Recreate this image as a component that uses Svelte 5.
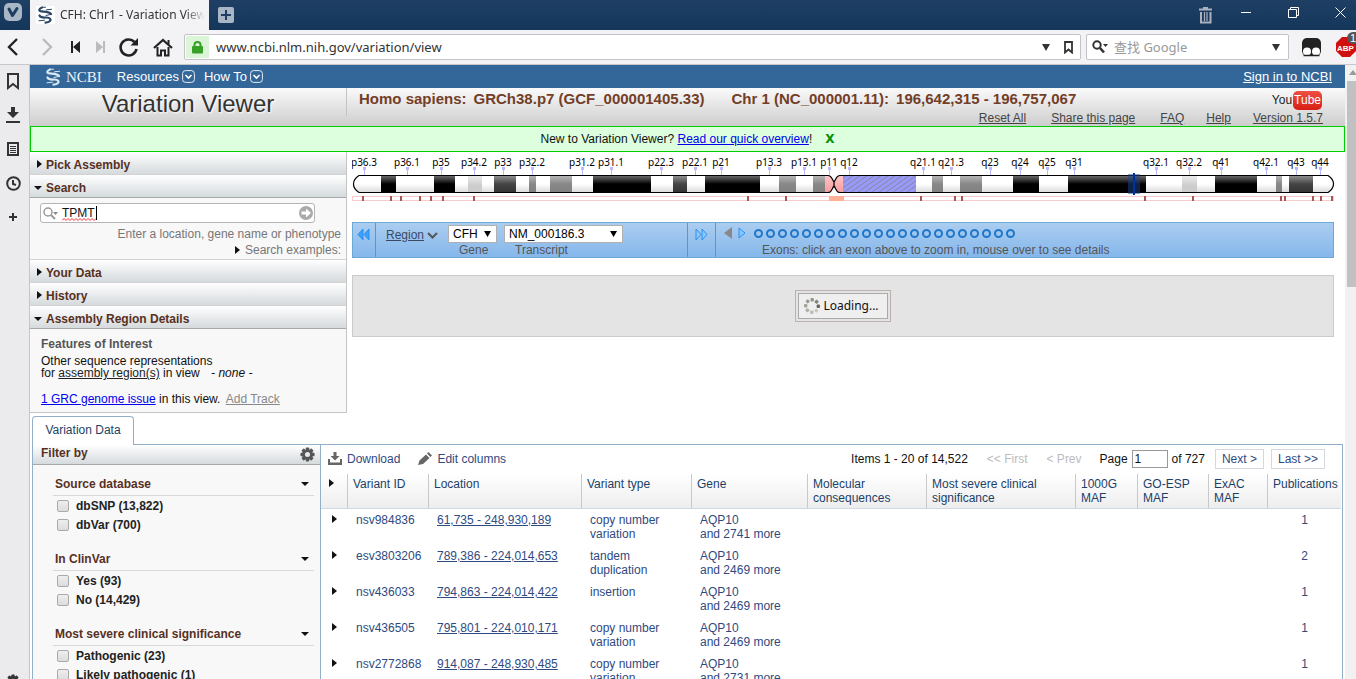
<script>
  let query = $state('TPMT');
  let page = $state('1');

  // Chromosome bands: [start, end, fill]
  const bands = [
    [381, 396, 'black'], [434, 455, 'black'], [468, 482, 'light'], [494, 516, 'dark'],
    [529, 536, 'mid'], [550, 572, 'mid'], [593, 651, 'black'], [673, 687, 'dark'],
    [705, 760, 'black'], [779, 796, 'mid'], [813, 825, 'mid'], [825, 834, 'pink'],
    [834, 843, 'pink'], [843, 916, 'hatch'], [932, 943, 'mid'], [960, 982, 'mid'],
    [1013, 1039, 'black'], [1068, 1146, 'black'], [1182, 1197, 'light'], [1215, 1257, 'black'],
    [1276, 1282, 'mid'], [1289, 1313, 'dark']
  ];
  const labels = [
    ['p36.3', 364], ['p36.1', 407], ['p35', 441], ['p34.2', 474], ['p33', 503], ['p32.2', 532],
    ['p31.2', 582], ['p31.1', 611], ['p22.3', 661], ['p22.1', 695], ['p21', 721], ['p13.3', 769],
    ['p13.1', 804], ['p11', 829], ['q12', 849], ['q21.1', 923], ['q21.3', 951], ['q23', 990],
    ['q24', 1020], ['q25', 1047], ['q31', 1074], ['q32.1', 1156], ['q32.2', 1189], ['q41', 1221],
    ['q42.1', 1266], ['q43', 1296], ['q44', 1320]
  ];
  const ticks = [362, 390, 400, 419, 430, 442, 473, 747, 785, 920, 954, 961, 1144, 1192, 1280, 1284, 1312, 1320, 1331];
  const exons = Array.from({ length: 22 }, (_, i) => i + 1);

  const filters = [
    { title: 'Source database', items: ['dbSNP (13,822)', 'dbVar (700)'] },
    { title: 'In ClinVar', items: ['Yes (93)', 'No (14,429)'] },
    { title: 'Most severe clinical significance', items: ['Pathogenic (23)', 'Likely pathogenic (1)'] }
  ];
  const rows = [
    ['nsv984836', '61,735 - 248,930,189', 'copy number variation', 2741, 1],
    ['esv3803206', '789,386 - 224,014,653', 'tandem duplication', 2469, 2],
    ['nsv436033', '794,863 - 224,014,422', 'insertion', 2469, 1],
    ['nsv436505', '795,801 - 224,010,171', 'copy number variation', 2469, 1],
    ['nsv2772868', '914,087 - 248,930,485', 'copy number variation', 2731, 1]
  ];
  const spinner = ['#96968c', '#85857b', '#66665c', '#c9c9bf', '#bdbdb3', '#b0b0a6', '#a3a399', '#9a9a90'];
</script>

{#snippet helix(color)}
  <svg width="17" height="18" viewBox="0 0 17 18" fill="none" stroke={color} stroke-linecap="round" aria-hidden="true">
    <path stroke-width="2.2" d="M5 1.500C1.500 3 1.500 5 4.500 5.400C8 5.800 12.500 5.500 14 8" />
    <path stroke-width="1" d="M6 1.300L8.500 1.200M9.500 3.800L14.500 3.300" />
    <path stroke-width="2.2" d="M2.500 9.500C3.500 12 7 11.500 9.500 11.500C13 11.500 14.500 13.500 13 15C12 16 10.500 16.500 8.500 16.600" />
    <path stroke-width="1" d="M9 9.500L14 8.300M2 14.800L7.500 14.200" />
  </svg>
{/snippet}

{#snippet caretRight()}
  <svg width="5" height="8" viewBox="0 0 5 8" aria-hidden="true"><path d="M0 0L5 4L0 8Z" fill="#111" /></svg>
{/snippet}

{#snippet caretDown()}
  <svg width="8" height="4" viewBox="0 0 8 4" aria-hidden="true"><path d="M0 0H8L4 4Z" fill="#111" /></svg>
{/snippet}

{#snippet menuMark()}
  <svg width="13" height="13" viewBox="0 0 13 13" fill="none" aria-hidden="true">
    <rect x=".6" y=".6" width="11.800" height="11.800" rx="3" stroke="#e8eef5" />
    <path d="M3.500 5L6.500 8L9.500 5" stroke="#fff" stroke-width="1.600" />
  </svg>
{/snippet}

{#snippet gear(size, color)}
  <svg width={size} height={size} viewBox="0 0 16 16" aria-hidden="true">
    <g fill={color}>
      {#each [0, 45, 90, 135] as a}
        <rect x="6.200" y="0.500" width="3.600" height="15" rx=".8" transform="rotate({a} 8 8)" />
      {/each}
    </g>
    <circle cx="8" cy="8" r="4.200" fill="none" stroke={color} stroke-width="3" />
    <circle cx="8" cy="8" r="2.700" fill="#e6e9ec" />
  </svg>
{/snippet}

<div class="browser">
  <div class="titlebar">
    <button class="vivaldi" aria-label="Menu">
      <svg width="18" height="18" viewBox="0 0 18 18"><rect width="18" height="18" rx="5" fill="#a9b6c5" /><path d="M5 6L8.500 12.500L13 5.500" fill="none" stroke="#1d3d61" stroke-width="3" stroke-linecap="round" stroke-linejoin="round" /></svg>
    </button>
    <div class="tab">
      <span class="favicon">{@render helix('#2b4763')}</span>
      <span class="tab-title">CFH: Chr1 - Variation View</span>
    </div>
    <button class="newtab" aria-label="New tab">
      <svg width="16" height="16" viewBox="0 0 16 16"><rect width="16" height="16" rx="2" fill="#a9b6c5" /><path d="M8 3V13M3 8H13" stroke="#1d3d61" stroke-width="2" /></svg>
    </button>
    <div class="window-buttons">
      <button class="trash" aria-label="Closed tabs">
        <svg width="14" height="17" viewBox="0 0 14 17" fill="none" stroke="#a9b2bd"><path d="M0 2.500H13M4 1H9" stroke-width="2" /><path d="M2 5V15.500H11.500V5" stroke-width="2" /><path d="M5.500 5V14M8 5V14" stroke-width="1.200" /></svg>
      </button>
      <button class="minimize" aria-label="Minimize"><svg width="11" height="7" viewBox="0 0 11 7"><path d="M0 3.500H10" stroke="#fff" /></svg></button>
      <button class="restore" aria-label="Restore"><svg width="11" height="11" viewBox="0 0 11 11" fill="none" stroke="#fff"><path d="M.5 2.500H8.500V10.500H.5ZM2.500 2.500V.5H10.500V8.500H8.500" /></svg></button>
      <button aria-label="Close"><svg width="11" height="11" viewBox="0 0 11 11"><path d="M.5 .5L10.500 10.500M10.500 .5L.5 10.500" stroke="#fff" /></svg></button>
    </div>
  </div>

  <div class="toolbar">
    <div class="nav">
      <button aria-label="Back"><svg width="12" height="18" viewBox="0 0 12 18"><path d="M10 1L2 9L10 17" fill="none" stroke="#222" stroke-width="2.400" /></svg></button>
      <button aria-label="Forward"><svg width="12" height="18" viewBox="0 0 12 18"><path d="M2 1L10 9L2 17" fill="none" stroke="#bbb" stroke-width="2.400" /></svg></button>
      <button aria-label="Rewind"><svg width="10" height="12" viewBox="0 0 10 12" fill="#222"><path d="M0 0H2V12H0ZM2 6L9 0V12Z" /></svg></button>
      <button aria-label="Fast forward"><svg width="10" height="12" viewBox="0 0 10 12" fill="#bbb"><path d="M8 0H10V12H8ZM8 6L1 0V12Z" /></svg></button>
      <button aria-label="Reload"><svg width="20" height="20" viewBox="0 0 20 20"><path d="M15.500 5A8 8 0 1 0 17.500 12" fill="none" stroke="#222" stroke-width="2.600" /><path d="M19 1V8.500H11.500Z" fill="#222" /></svg></button>
      <button aria-label="Home"><svg width="20" height="19" viewBox="0 0 20 19" fill="none" stroke="#222"><path d="M1 10L10 2L19 10" stroke-width="2.200" /><path d="M4.500 9V17.500H8V12.500H12V17.500H15.500V9" stroke-width="2" /><path d="M15.500 2V6" stroke-width="2" /></svg></button>
    </div>
    <div class="url">
      <span class="lock"><svg width="11" height="13" viewBox="0 0 11 13"><path d="M2.500 6V4A3 3 0 0 1 8.500 4V6" fill="none" stroke="#37a127" stroke-width="2" /><rect y="5" width="11" height="7.500" rx="1" fill="#37a127" /></svg></span>
      <input aria-label="Address" value="www.ncbi.nlm.nih.gov/variation/view" />
      <svg width="8" height="7" viewBox="0 0 8 7"><path d="M0 0H8L4 7Z" fill="#333" /></svg>
      <svg class="mark" width="9" height="13" viewBox="0 0 9 13"><path d="M1 1H8V11.500L4.500 8.500L1 11.500Z" fill="none" stroke="#333" stroke-width="1.800" /></svg>
    </div>
    <div class="find">
      <svg width="17" height="14" viewBox="0 0 17 14"><circle cx="5" cy="5" r="3.700" fill="none" stroke="#333" stroke-width="2" /><path d="M8 8L12 12.500" stroke="#333" stroke-width="2.600" /><path d="M11 4H16L13.500 7Z" fill="#333" /></svg>
      <input aria-label="Search the web" placeholder="查找 Google" />
      <svg width="8" height="7" viewBox="0 0 8 7"><path d="M0 0H8L4 7Z" fill="#333" /></svg>
    </div>
    <button class="ext" aria-label="Extension">
      <svg width="19" height="19" viewBox="0 0 19 19"><rect width="19" height="18" rx="5" fill="#222" /><circle cx="5" cy="13.500" r="4" fill="#fff" /><circle cx="14" cy="13.500" r="4" fill="#fff" /><path d="M1.500 17.500H17.500" stroke="#222" stroke-width="1.500" /></svg>
    </button>
    <button class="abp" aria-label="Ad blocker"><svg width="20" height="20" viewBox="0 0 20 20"><path d="M6 0H14L20 6V14L14 20H6L0 14V6Z" fill="#d0100e" /></svg><b>ABP</b><i>1</i></button>
  </div>

  <div class="body">
    <nav class="panelbar" aria-label="Panels">
      <button aria-label="Bookmarks"><svg width="12" height="17" viewBox="0 0 12 17"><path d="M1 1H11V15L6 11L1 15Z" fill="none" stroke="#333" stroke-width="2" /></svg></button>
      <button aria-label="Downloads"><svg width="14" height="16" viewBox="0 0 14 16" fill="#333"><path d="M5 0H9V5H13L7 11L1 5H5ZM0 14H14V16H0Z" /></svg></button>
      <button aria-label="Notes"><svg width="12" height="14" viewBox="0 0 12 14"><rect x="1" y="1" width="10" height="12" fill="none" stroke="#333" stroke-width="2" /><path d="M3 4.500H9M3 6.500H9M3 8.500H9M3 10.500H9" stroke="#333" /></svg></button>
      <button aria-label="History"><svg width="15" height="15" viewBox="0 0 15 15" fill="none" stroke="#333" stroke-width="2"><circle cx="7.500" cy="7.500" r="6.300" /><path d="M7 4V8L10 9" /></svg></button>
      <button aria-label="Add panel"><svg width="8" height="8" viewBox="0 0 8 8"><path d="M4 0V8M0 4H8" stroke="#333" stroke-width="2" /></svg></button>
      <button class="settings" aria-label="Settings">{@render gear(14, '#333')}</button>
    </nav>

    <div class="page">
      <header class="ncbi">
        {@render helix('#dbe7f2')}
        <span class="brand">NCBI</span>
        <button>Resources {@render menuMark()}</button>
        <button>How To {@render menuMark()}</button>
        <a class="signin" href="#signin">Sign in to NCBI</a>
      </header>

      <div class="heading">
        <h1>Variation Viewer</h1>
        <div class="meta">
          <div class="assembly">
            <span>Homo sapiens:</span><span>GRCh38.p7 (GCF_000001405.33)</span>
            <span class="chr">Chr 1 (NC_000001.11):</span><span>196,642,315 - 196,757,067</span>
            <a class="youtube" href="#youtube">You<b>Tube</b></a>
          </div>
          <div class="links">
            <a href="#reset">Reset All</a><a href="#share">Share this page</a><a href="#faq">FAQ</a><a href="#help">Help</a><a href="#version">Version 1.5.7</a>
          </div>
        </div>
      </div>

      <div class="notice">
        <span>New to Variation Viewer? <a href="#overview">Read our quick overview</a>!</span>
        <button aria-label="Dismiss">X</button>
      </div>

      <div class="main">
        <aside class="accordion">
          <h2><button><span class="mark">{@render caretRight()}</span>Pick Assembly</button></h2>
          <h2 class="open"><button><span class="mark">{@render caretDown()}</span>Search</button></h2>
          <form class="search">
            <div class="field">
              <svg width="16" height="13" viewBox="0 0 16 13"><circle cx="5" cy="5" r="4" fill="none" stroke="#999" stroke-width="1.500" /><path d="M8 8L12 12" stroke="#999" stroke-width="2" /><path d="M10 5H15L12.500 8Z" fill="#888" /></svg>
              <input aria-label="Search location" spellcheck="false" bind:value={query} />
              <svg class="squiggle" width="34" height="3" viewBox="0 0 34 3"><path d="M0 2.500L2 .5L4 2.500L6 .5L8 2.500L10 .5L12 2.500L14 .5L16 2.500L18 .5L20 2.500L22 .5L24 2.500L26 .5L28 2.500L30 .5L32 2.500L34 .5" fill="none" stroke="#f03030" /></svg>
              <span class="cursor"></span>
              <button type="button" aria-label="Go"><svg width="14" height="14" viewBox="0 0 14 14"><circle cx="7" cy="7" r="7" fill="#aaa" /><path d="M2.500 5.500H7V2.500L12 7L7 11.500V8.500H2.500Z" fill="#fff" /></svg></button>
            </div>
            <p>Enter a location, gene name or phenotype</p>
            <p>{@render caretRight()} Search examples:</p>
          </form>
          <h2><button><span class="mark">{@render caretRight()}</span>Your Data</button></h2>
          <h2><button><span class="mark">{@render caretRight()}</span>History</button></h2>
          <h2 class="open"><button><span class="mark">{@render caretDown()}</span>Assembly Region Details</button></h2>
          <div class="details">
            <h3>Features of Interest</h3>
            <p>Other sequence representations<br />for <a href="#regions">assembly region(s)</a> in view <em>- none -</em></p>
            <p class="issue"><a href="#issue">1 GRC genome issue</a> in this view. <a class="add" href="#track">Add Track</a></p>
          </div>
        </aside>

        <section class="viewer">
          <svg class="ideogram" viewBox="352 152 982 50" role="img" aria-label="Chromosome 1">
            <defs>
              <linearGradient id="black" x2="0" y2="1"><stop offset="0" stop-color="#777" /><stop offset=".4" stop-color="#1a1a1a" /><stop offset=".5" stop-color="#000" /></linearGradient>
              <linearGradient id="dark" x2="0" y2="1"><stop offset="0" stop-color="#999" /><stop offset=".5" stop-color="#444" /><stop offset="1" stop-color="#333" /></linearGradient>
              <linearGradient id="mid" x2="0" y2="1"><stop offset="0" stop-color="#bbb" /><stop offset=".5" stop-color="#888" /><stop offset="1" stop-color="#808080" /></linearGradient>
              <linearGradient id="light" x2="0" y2="1"><stop offset="0" stop-color="#eee" /><stop offset=".6" stop-color="#ccc" /><stop offset="1" stop-color="#ccc" /></linearGradient>
              <linearGradient id="pink" x2="0" y2="1"><stop offset="0" stop-color="#ffc8c8" /><stop offset="1" stop-color="#f99a9a" /></linearGradient>
              <linearGradient id="white" x2="0" y2="1"><stop offset=".5" stop-color="#fff" /><stop offset="1" stop-color="#d8d8d8" /></linearGradient>
              <pattern id="hatch" width="7" height="5" patternUnits="userSpaceOnUse"><rect width="7" height="5" fill="#9999f8" /><path d="M0 5L7 0" stroke="#8585a0" /></pattern>
              <clipPath id="arms"><path d="M359 175.500H828C832 175.500 832 180 834 182V186C832 188 832 192.500 828 192.500H359Q353.500 189 353.500 184T359 175.500ZM840 175.500H1328Q1333.500 179 1333.500 184T1328 192.500H840C836 192.500 836 188 834 186V182C836 180 836 175.500 840 175.500Z" /></clipPath>
            </defs>
            {#each labels as [name, x]}
              <text {x} y="166" text-anchor="middle">{name}</text>
              <path d="M{x - 1} 167H{x + 2}V170H{x + 1}V175H{x}V170H{x - 1}Z" fill="#b9b9fb" />
            {/each}
            <g clip-path="url(#arms)">
              <rect x="353" y="175" width="981" height="18" fill="url(#white)" />
              {#each bands as [a, b, fill]}
                <rect x={a} y="175" width={b - a} height="18" fill="url(#{fill})" />
              {/each}
            </g>
            <path fill="none" stroke="#000" stroke-width="1.200" d="M359 175.500H828C832 175.500 832 180 834 182V186C832 188 832 192.500 828 192.500H359Q353.500 189 353.500 184T359 175.500ZM840 175.500H1328Q1333.500 179 1333.500 184T1328 192.500H840C836 192.500 836 188 834 186V182C836 180 836 175.500 840 175.500Z" />
            <rect x="1128" y="174" width="12" height="20" fill="#1b418f" opacity=".5" />
            <rect x="1133" y="173" width="2" height="22" fill="#003399" />
            <rect x="352.500" y="196.500" width="981" height="4" fill="#fff" stroke="#f6cccc" />
            <rect x="829" y="196" width="15" height="5" fill="#ffaf93" />
            {#each ticks as x}
              <rect {x} y="196" width="2" height="5" fill="#a85555" />
            {/each}
          </svg>

          <div class="controls">
            <button class="prev" aria-label="Previous"><svg width="13" height="13" viewBox="0 0 13 13" fill="#3da0fa" stroke="#2b90ee"><path d="M6 1V12L1 6.500ZM12 1V12L7 6.500Z" /></svg></button>
            <div class="region">
              <button class="region-link"><u>Region</u> <svg width="11" height="7" viewBox="0 0 11 7"><path d="M1 1L5.500 5.500L10 1" fill="none" stroke="#555" stroke-width="2" /></svg></button>
              <div class="pick gene"><div class="drop"><select aria-label="Gene"><option>CFH</option></select></div><span>Gene</span></div>
              <div class="pick transcript"><div class="drop"><select aria-label="Transcript"><option>NM_000186.3</option></select></div><span>Transcript</span></div>
            </div>
            <button class="next" aria-label="Next"><svg width="13" height="13" viewBox="0 0 13 13" fill="#8cc9ff" stroke="#2b90ee"><path d="M1 1V12L6 6.500ZM7 1V12L12 6.500Z" /></svg></button>
            <div class="exons">
              <div class="exon-row">
                <button aria-label="Previous exon"><svg width="8" height="12" viewBox="0 0 8 12"><path d="M8 0V12L0 6Z" fill="#888" /></svg></button>
                <button class="fwd" aria-label="Next exon"><svg width="8" height="12" viewBox="0 0 8 12"><path d="M1 1V11L7 6Z" fill="#84c8ff" stroke="#2b90ee" /></svg></button>
                {#each exons as n}<button class="exon" aria-label="Exon {n}"></button>{/each}
              </div>
              <p>Exons: click an exon above to zoom in, mouse over to see details</p>
            </div>
          </div>

          <div class="canvas">
            <div class="loading"><div>
              <svg width="16" height="16" viewBox="0 0 16 16">
                {#each spinner as c, i}<rect x="6.500" y="0" width="3.400" height="3.400" rx="1" fill={c} transform="rotate({i * 45} 8 8)" />{/each}
              </svg>
              Loading...
            </div></div>
          </div>
        </section>
      </div>

      <section class="data">
        <button class="data-tab">Variation Data</button>
        <div class="data-body">
          <aside class="filters">
            <h2><span>Filter by</span> {@render gear(15, '#555')}</h2>
            <div class="groups">
              {#each filters as group}
                <fieldset>
                  <legend>{group.title} {@render caretDown()}</legend>
                  {#each group.items as item}
                    <label><input type="checkbox" />{item}</label>
                  {/each}
                </fieldset>
              {/each}
            </div>
          </aside>

          <div class="results">
            <div class="actions">
              <button><svg width="14" height="13" viewBox="0 0 14 13" fill="#666"><path d="M5.500 0H8.500V4H11.500L7 8.500L2.500 4H5.500ZM0 7H2V10.500H12V7H14V13H0Z" /></svg>Download</button>
              <button class="edit"><svg width="14" height="14" viewBox="0 0 14 14" fill="#666"><path d="M0 13L1.500 8.500L8 2.500L11.500 6L5 12ZM9 1.500L10.500 0L14 3.500L12.500 5Z" /></svg>Edit columns</button>
              <span class="items">Items 1 - 20 of 14,522</span>
              <button class="off first" disabled>&lt;&lt; First</button>
              <button class="off prev-page" disabled>&lt; Prev</button>
              <label class="pageno">Page <input bind:value={page} /></label>
              <span class="of">of 727</span>
              <button class="box">Next &gt;</button>
              <button class="box">Last &gt;&gt;</button>
            </div>
            <table>
              <colgroup><col class="c0" /><col class="c1" /><col class="c2" /><col class="c3" /><col class="c4" /><col class="c5" /><col class="c6" /><col class="c7" /><col class="c8" /><col class="c9" /><col /></colgroup>
              <thead>
                <tr>
                  <th class="arrow" aria-label="Expand">{@render caretRight()}</th><th>Variant ID</th><th>Location</th><th>Variant type</th><th>Gene</th><th>Molecular consequences</th><th>Most severe clinical significance</th><th>1000G MAF</th><th>GO-ESP MAF</th><th>ExAC MAF</th><th>Publications</th>
                </tr>
              </thead>
              <tbody>
                {#each rows as [id, location, type, more, pubs]}
                  <tr>
                    <td class="arrow">{@render caretRight()}</td><td>{id}</td><td><a href="#location">{location}</a></td><td>{type}</td><td>AQP10<br />and {more} more</td><td></td><td></td><td></td><td></td><td></td><td class="pubs">{pubs}</td>
                  </tr>
                {/each}
              </tbody>
            </table>
          </div>
        </div>
      </section>
    </div>

    <div class="scrollbar"><svg width="12" height="16" viewBox="0 0 12 16"><path d="M4 10L8 5L12 10Z" fill="#999" /></svg><div class="thumb"></div></div>
  </div>
</div>

<style>
  :global(body) { margin: 0; overflow: hidden; }
  .browser, .browser :global(*) { box-sizing: border-box; }
  .browser { height: 100vh; display: flex; flex-direction: column; overflow: hidden; font: 12px/14px "Liberation Sans", Arial, sans-serif; color: #111; background: #fff; }
  button { font: inherit; color: inherit; background: none; border: 0; padding: 0; display: flex; align-items: center; justify-content: center; white-space: nowrap; }
  input, select { font: inherit; color: inherit; min-width: 0; outline: 0; }
  svg { display: block; flex: none; }
  h1, h2, h3, p { margin: 0; font-size: inherit; }

  .titlebar { flex: none; display: flex; height: 30px; background: linear-gradient(#1f4064, #14365a); }
  .vivaldi { width: 30px; padding: 0 4px 7px 0; }
  .tab { display: flex; align-items: center; width: 179px; padding: 0 4px 0 6px; background: #f3f3f5; font: 12px/16px "Noto Sans", sans-serif; color: #333; overflow: hidden; }
  .favicon { flex: none; padding: 0 1px; background: #fff; }
  .tab-title { flex: 1; margin-left: 5px; overflow: hidden; white-space: nowrap; mask-image: linear-gradient(90deg, #000 86%, transparent); }
  .newtab { width: 34px; }
  .window-buttons { margin-left: auto; display: flex; padding-bottom: 6px; }
  .window-buttons button { width: 32px; }
  .window-buttons .trash { width: 48px; padding-top: 6px; }
  .window-buttons .restore { width: 62px; }

  .toolbar { flex: none; display: flex; align-items: center; height: 35px; background: #f3f3f5; border-bottom: 1px solid #c8c8cc; font: 14px/20px "Noto Sans", "Noto Sans CJK SC", sans-serif; color: #333; overflow: hidden; }
  .nav { display: grid; grid-template-columns: 26px 42px 16px 32px 26px 42px; }
  .url, .find { display: flex; align-items: center; height: 26px; background: #fff; border: 1px solid #c3c3c7; border-radius: 2px; }
  .url { flex: 1; padding-right: 7px; }
  .url input, .find input { flex: 1; border: 0; padding: 0; background: none; font-size: 13px; }
  .lock { display: grid; place-items: center; width: 23px; height: 22px; margin: 0 7px 0 1px; background: #dcf5d8; }
  .mark { flex: none; }
  .url .mark { margin-left: 14px; }
  .find { width: 203px; margin-left: 5px; padding: 0 8px 0 5px; }
  .find input { margin-left: 5px; }
  .find input::placeholder { color: #999; }
  .ext { margin-left: 13px; width: 19px; }
  .abp { position: relative; width: 20px; height: 32px; margin-left: 15px; }
  .abp b { position: absolute; left: 1px; top: 14px; color: #fff; font: bold 8px/8px "Liberation Sans", sans-serif; }
  .abp i { position: absolute; left: 11px; top: 1px; width: 14px; height: 12px; padding-left: 3px; border-radius: 6px; background: #555; color: #fff; font: 11px/12px "Liberation Sans", sans-serif; text-align: left; }

  .body { flex: 1; min-height: 0; display: flex; }
  .panelbar { flex: none; width: 30px; display: flex; flex-direction: column; background: #ebebee; border-right: 1px solid #c5c5c9; padding-right: 3px; overflow: hidden; }
  .panelbar button { flex: none; height: 34px; padding-bottom: 2px; }
  .panelbar .settings { margin: auto 0 -20px; }
  .page { flex: 1; min-width: 0; display: flex; flex-direction: column; overflow: hidden; }
  .scrollbar { flex: none; width: 11px; background: #f1f1f1; overflow: hidden; }
  .scrollbar .thumb { height: 206px; margin-left: 2px; background: #c1c1c1; }

  .ncbi { flex: none; display: flex; align-items: center; height: 23px; padding: 0 13px 0 15px; background: #336699; color: #fff; font-size: 13px; }
  .brand { margin-left: 4px; font: 15px/20px "Liberation Serif", serif; color: #eef4f9; }
  .ncbi button { gap: 3px; margin-left: 9px; }
  .ncbi .brand + button { margin-left: 15px; }
  .ncbi a { margin-left: auto; color: #fff; }

  .heading { flex: none; display: flex; height: 38px; background: linear-gradient(#fafafa, #cdcdcd); }
  .heading h1 { width: 317px; height: 28px; border-right: 1px solid #c4c4c4; text-align: center; font-size: 24px; line-height: 32px; font-weight: 400; color: #333; text-shadow: 1px 1px 2px #fff; }
  .meta { flex: 1; display: flex; flex-direction: column; }
  .assembly { display: flex; gap: 7px; height: 23px; padding: 2px 23px 0 12px; font-size: 15px; line-height: 18px; font-weight: 700; color: #733e27; }
  .chr { margin-left: 20px; }
  .youtube { display: flex; align-items: center; gap: 1px; margin-left: auto; color: #222; text-decoration: none; font: 12px/19px "Liberation Sans Narrow", "Liberation Sans", sans-serif; }
  .youtube b { padding: 0 1px; font-weight: 400; border-radius: 5px; background: linear-gradient(#ee5043, #d81e12); color: #fff; }
  .links { display: flex; justify-content: flex-end; gap: 25px; padding-right: 22px; color: #444; }
  .links a { color: inherit; }
  .links a:nth-child(n+4) { margin-left: -3px; }

  .notice { flex: none; display: flex; justify-content: center; align-items: center; gap: 13px; height: 26px; background: #ddffdd; border: 1px solid #00cc00; }
  .notice a { color: #0000ee; }
  .notice button { color: #009000; font: bold 12px/14px "DejaVu Sans", sans-serif; }

  .main { flex: none; display: flex; }
  .accordion { flex: none; width: 317px; border-right: 1px solid #c4c4c4; border-bottom: 1px solid #c4c4c4; background: #f8f8f8; }
  .accordion h2 { height: 23px; border-bottom: 1px solid #d2d2d2; background: linear-gradient(#fff, #d5dadd); color: #57301f; }
  .accordion h2.open { border-bottom-color: #a6a8aa; }
  .accordion h2 button { height: 23px; width: 100%; justify-content: flex-start; padding: 2px 0 0; font-weight: 700; }
  .accordion h2 .mark { width: 16px; padding-left: 7px; padding-bottom: 2px; }
  .accordion h2.open .mark { padding-left: 4px; padding-bottom: 0; }
  .search { height: 62px; padding: 5px 5px 0 10px; border-bottom: 1px solid #d2d2d2; color: #777; }
  .field { position: relative; display: flex; align-items: center; width: 275px; height: 20px; padding: 0 1px 0 2px; border: 1px solid #b5b5b5; border-radius: 3px; background: #fff; }
  .field input { flex: 1; border: 0; padding: 0; margin-left: 3px; color: #111; background: none; }
  .squiggle { position: absolute; left: 21px; top: 14px; }
  .cursor { position: absolute; left: 55px; top: 2px; width: 1px; height: 14px; background: #000; }
  .search p { display: flex; align-items: center; justify-content: flex-end; gap: 5px; line-height: 16px; }
  .field + p { margin-top: 3px; }
  .details { height: 83px; padding: 8px 11px 0; }
  .details h3 { color: #555; }
  .details p { margin-top: 4px; line-height: 12px; }
  .details a { color: #222; }
  .details em { margin-left: 8px; }
  .details .issue { margin-top: 14px; }
  .details .issue a { color: #0000ee; }
  .details .issue .add { margin-left: 2px; color: #888; }

  .viewer { flex: 1; min-width: 0; padding: 0 11px 0 5px; }
  .ideogram { width: 100%; height: auto; }
  .ideogram text { font: 10px "Noto Sans", sans-serif; fill: #000; }
  .controls { display: flex; height: 36px; margin-top: 20px; border: 1px solid #6aaad6; background: linear-gradient(#abcdf0, #85b7eb); color: #555; }
  .controls > :not(:last-child) { border-right: 1px solid #6e8fb8; }
  .prev { width: 23px; padding: 0 2px 12px 0; }
  .region { display: flex; align-items: flex-start; width: 312px; padding: 2px 0 0 10px; }
  .region-link { gap: 3px; height: 20px; }
  .region-link u { color: #3a4a66; }
  .pick { margin-left: 10px; }
  .pick.transcript { margin-left: 7px; }
  .pick span { margin-left: 11px; line-height: 14px; }
  .drop { position: relative; height: 18px; }
  .drop::after { content: ""; position: absolute; right: 6px; top: 6px; width: 7px; height: 6px; background: #000; clip-path: polygon(0 0, 100% 0, 50% 100%); }
  .gene .drop { width: 49px; }
  .transcript .drop { width: 119px; }
  select { appearance: none; display: block; width: 100%; height: 18px; padding: 0 0 0 4px; border: 1px solid #b0b0b0; border-radius: 0; background: #fff; color: #000; line-height: 14px; }
  .next { width: 28px; padding-bottom: 12px; }
  .exons { padding: 4px 0 0 8px; }
  .exon-row { display: flex; align-items: center; height: 12px; }
  .exon-row .fwd { margin: 0 8px 0 6px; }
  .exon { width: 9px; height: 9px; margin-right: 3px; border: 2px solid #1f77cc; border-radius: 5px; }
  .exons p { margin: 4px 0 0 38px; }
  .canvas { display: grid; place-items: center; height: 62px; margin-top: 17px; background: #e4e4e4; border: 1px solid #cbcbcb; }
  .loading { padding: 2px; border: 1px solid #bfb0b0; background: #e4e4e4; }
  .loading div { display: flex; align-items: center; gap: 3px; height: 26px; padding: 0 8px 0 5px; border: 1px solid #aaa; background: #efefef; font: 12px/14px "Noto Sans", sans-serif; }

  .data { flex: 1; min-height: 0; display: flex; flex-direction: column; padding: 3px 2px 0; }
  .data-tab { z-index: 1; flex: none; align-self: flex-start; width: 102px; height: 29px; padding-bottom: 2px; margin-bottom: -1px; border: 1px solid #92b0cb; border-bottom: 0; border-radius: 4px 4px 0 0; background: #fff; color: #1c3f66; }
  .data-body { flex: 1; min-height: 0; display: flex; border: 1px solid #92b0cb; border-bottom: 0; overflow: hidden; }
  .filters { flex: none; width: 288px; border-right: 1px solid #92b0cb; background: #f8f8f8; color: #57301f; }
  .filters h2 { display: flex; justify-content: space-between; align-items: center; height: 20px; padding: 0 5px 0 8px; border-bottom: 1px solid #a6a8aa; background: linear-gradient(#fff, #d5dadd); line-height: 14px; }
  .filters h2 span { padding-bottom: 3px; }
  .groups { display: flex; flex-direction: column; gap: 14px; padding: 8px 6px 0 20px; }
  fieldset { display: flex; flex-direction: column; min-width: 0; margin: 0; padding: 0; border: 0; font-weight: 700; }
  legend { display: flex; align-items: center; justify-content: space-between; width: 100%; height: 23px; padding: 0 5px 0 2px; border-bottom: 1px solid #d8d8d8; }
  .groups label { display: flex; align-items: center; gap: 7px; height: 19px; padding-left: 4px; color: #222; }
  .groups input { appearance: none; width: 12px; height: 12px; margin: 0; border: 1px solid #aaa; border-radius: 2px; background: linear-gradient(#eee, #dcdcdc); }

  .results { flex: 1; min-width: 0; padding-right: 1px; color: #2f4a7f; }
  .actions { display: flex; align-items: center; height: 29px; padding: 0 16px 2px 7px; }
  .actions button svg { margin-right: 5px; }
  .actions .edit { margin-left: 18px; }
  .items { margin-left: auto; color: #111; }
  .actions .off { color: #bbb; margin-left: 19px; }
  .pageno { display: flex; align-items: center; gap: 4px; margin-left: 18px; color: #111; }
  .pageno input { width: 36px; height: 18px; padding: 0 2px; border: 1px solid #999; }
  .of { margin: 0 3px 0 4px; color: #111; }
  .box { height: 20px; margin-left: 7px; padding: 0 6px; border: 1px solid #d5d9df; background: #fff; }
  table { width: 100%; table-layout: fixed; border-collapse: separate; border-spacing: 0; }
  .c0 { width: 27px; } .c1 { width: 81px; } .c2 { width: 153px; } .c3 { width: 110px; } .c4 { width: 116px; } .c5 { width: 119px; }
  .c6 { width: 149px; } .c7 { width: 62px; } .c8 { width: 71px; } .c9 { width: 59px; }
  th { height: 35px; padding: 3px 0 3px 5px; border-right: 1px solid #c9c9c9; border-bottom: 1px solid #cfdae6; background: linear-gradient(#fff, #eeeeef); text-align: left; vertical-align: top; font-weight: 400; color: #1c3f66; }
  th:last-child { border-right: 0; }
  td { height: 36px; padding: 4px 22px 4px 8px; vertical-align: top; }
  td:nth-child(2), td:nth-child(3) { padding-right: 0; }
  td a { color: inherit; }
  th.arrow { padding: 5px 0 0 8px; }
  td.arrow { padding: 6px 0 0 11px; }
  td.pubs { padding: 4px 0; text-align: center; }
</style>
